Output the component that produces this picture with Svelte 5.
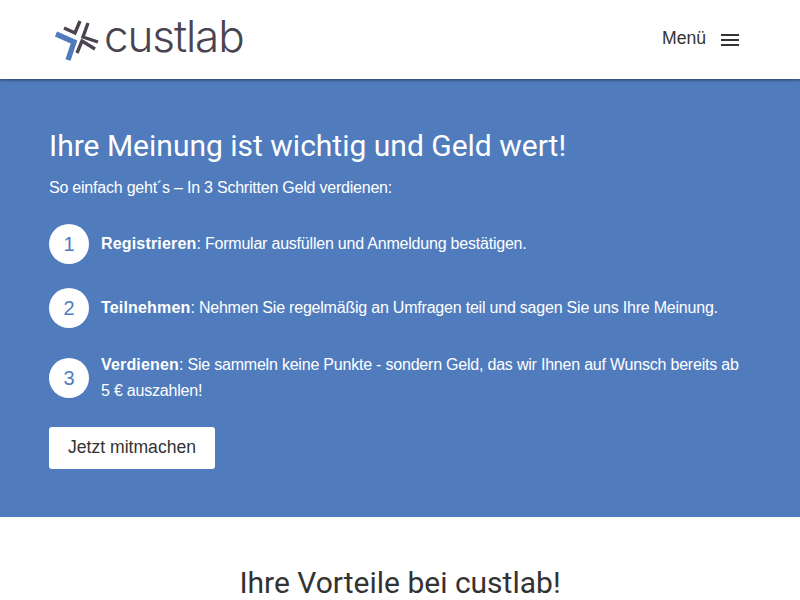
<script>
  const steps = [
    { n: 1, b: 'Registrieren', t: ': Formular ausfüllen und Anmeldung bestätigen.' },
    { n: 2, b: 'Teilnehmen', t: ': Nehmen Sie regelmäßig an Umfragen teil und sagen Sie uns Ihre Meinung.' },
    { n: 3, b: 'Verdienen', t: ': Sie sammeln keine Punkte - sondern Geld, das wir Ihnen auf Wunsch bereits ab 5 € auszahlen!' }
  ];
</script>

<div class="page">
  <header class="top">
    <div class="logo">
      <svg class="mark" width="47" height="44" viewBox="0 0 47 44" aria-hidden="true">
        <g fill="none" stroke-linecap="butt" stroke-linejoin="miter">
          <path d="M2 14 L20 22 L14 40" stroke="#4f7bbd" stroke-width="5.4"/>
          <path d="M10 8 L21 13 L26 1" stroke="#4a4350" stroke-width="3.4"/>
          <path d="M34 3 L29 17 L44 22" stroke="#4a4350" stroke-width="3.4"/>
          <path d="M23 33 L28 21 L41 29" stroke="#4a4350" stroke-width="3.4"/>
        </g>
      </svg>
      <span class="word">custlab</span>
    </div>
    <div class="menu">
      <span>Menü</span>
      <span class="burger"><i></i><i></i><i></i></span>
    </div>
  </header>

  <section class="hero">
    <h1>Ihre Meinung ist wichtig und Geld wert!</h1>
    <p class="lead">So einfach geht´s – In 3 Schritten Geld verdienen:</p>
    <ul class="steps">
      {#each steps as s}
        <li>
          <span class="num">{s.n}</span>
          <p><strong>{s.b}</strong>{s.t}</p>
        </li>
      {/each}
    </ul>
    <button class="cta">Jetzt mitmachen</button>
  </section>

  <section class="benefits">
    <h2>Ihre Vorteile bei custlab!</h2>
  </section>
</div>

<style>
  :global(body) { margin: 0; overflow: hidden; }
  .page { font-family: "Liberation Sans", Arial, sans-serif; color: #333; width: 800px; height: 600px; overflow: hidden; background: #fff; }
  .top { height: 79px; display: flex; align-items: center; justify-content: space-between; padding: 0 61px 0 54px; position: relative; z-index: 1; box-shadow: 0 1px 3px rgba(0,0,0,.5); background: #fff; }
  .logo { display: flex; align-items: center; gap: 3px; }
  .mark { display: block; margin-top: 4px; }
  .word { font-family: "Inter", sans-serif; font-weight: 300; font-size: 44px; letter-spacing: -1.1px; line-height: 44px; color: #4a4350; margin-top: -7px; }
  .menu { display: flex; align-items: center; gap: 15px; font-size: 17.6px; padding-bottom: 2px; }
  .burger { display: flex; flex-direction: column; gap: 3px; width: 18px; margin-top: 3px; }
  .burger i { display: block; height: 2px; background: #333; }
  .hero { background: #507cbe; color: #fff; padding: 49px 49px 48px; }
  h1 { font-family: Roboto, sans-serif; font-weight: 400; font-size: 30px; line-height: 36px; margin: 0 0 11px; }
  .lead { font-size: 16px; letter-spacing: -0.22px; line-height: 26px; margin: 0 0 23px; }
  .steps { list-style: none; margin: 0; padding: 0; }
  .steps li { display: flex; align-items: center; gap: 12px; margin-bottom: 24px; }
  .steps li:last-child { margin-bottom: 23px; }
  .steps li p { margin: 0; font-size: 16px; letter-spacing: -0.21px; line-height: 26px; }
  .steps li strong { letter-spacing: 0.17px; }
  .num { flex: none; width: 40px; height: 40px; border-radius: 50%; background: #fff; color: #507cbe; display: flex; align-items: center; justify-content: center; font-size: 20px; }
  .cta { display: block; font: inherit; font-size: 17.6px; color: #333; background: #fff; border: 0; border-radius: 3px; width: 166px; height: 42px; padding: 0 0 2px; }
  .benefits { padding-top: 48px; text-align: center; }
  h2 { font-family: Roboto, sans-serif; font-weight: 400; font-size: 30px; line-height: 36px; margin: 0; color: #333; }
</style>
